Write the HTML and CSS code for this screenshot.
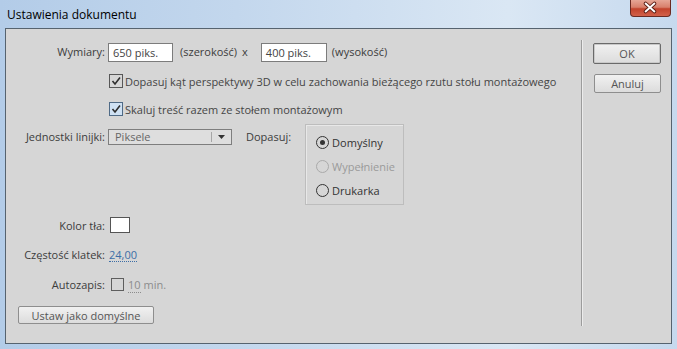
FILE: index.html
```html
<!DOCTYPE html>
<html lang="pl">
<head>
    <meta charset="UTF-8">
    <title>Ustawienia dokumentu</title>
    <link rel="stylesheet" href="styles.css">
</head>
<body>
    <div class="window">
        <div class="titlebar">
            <span class="title">Ustawienia dokumentu</span>
            <span class="close-btn">
                <svg width="41" height="17" viewBox="0 0 41 17">
                    <path d="M16 4.5 L25 12.5 M25 4.5 L16 12.5" stroke="#5a1d14" stroke-width="4" stroke-linecap="round"/>
                    <path d="M16 4.5 L25 12.5 M25 4.5 L16 12.5" stroke="#fff" stroke-width="2" stroke-linecap="round"/>
                </svg>
            </span>
        </div>

        <div class="client">
            <div class="main">
                <div class="row row-size">
                    <span class="label">Wymiary:</span>
                    <span class="field field-w">650 piks.</span>
                    <span class="note">(szerokość)</span>
                    <span class="times">x</span>
                    <span class="field field-h">400 piks.</span>
                    <span class="note note-h">(wysokość)</span>
                </div>

                <div class="row row-check1">
                    <span class="label"></span>
                    <span class="checkbox">
                        <svg width="12" height="12" viewBox="0 0 12 12"><path d="M2.5 6 L5 9 L10 2.5" fill="none" stroke="#2e2e2e" stroke-width="1.6"/></svg>
                    </span>
                    <span class="check-text">Dopasuj kąt perspektywy 3D w celu zachowania bieżącego rzutu stołu montażowego</span>
                </div>

                <div class="row row-check2">
                    <span class="label"></span>
                    <span class="checkbox focused">
                        <svg width="12" height="12" viewBox="0 0 12 12"><path d="M2.5 6 L5 9 L10 2.5" fill="none" stroke="#2e2e2e" stroke-width="1.6"/></svg>
                    </span>
                    <span class="check-text">Skaluj treść razem ze stołem montażowym</span>
                </div>

                <div class="row row-units">
                    <span class="label">Jednostki linijki:</span>
                    <span class="select">
                        <span class="select-value">Piksele</span>
                        <span class="select-arrow">
                            <svg width="7" height="4" viewBox="0 0 7 4"><path d="M0 0 H7 L3.5 4 Z" fill="#333"/></svg>
                        </span>
                    </span>
                    <span class="fit-label">Dopasuj:</span>
                    <div class="radio-group">
                        <div class="radio-row">
                            <span class="radio checked"></span>
                            <span>Domyślny</span>
                        </div>
                        <div class="radio-row disabled">
                            <span class="radio"></span>
                            <span>Wypełnienie</span>
                        </div>
                        <div class="radio-row">
                            <span class="radio"></span>
                            <span>Drukarka</span>
                        </div>
                    </div>
                </div>

                <div class="row row-color">
                    <span class="label">Kolor tła:</span>
                    <span class="swatch"></span>
                </div>

                <div class="row row-fps">
                    <span class="label">Częstość klatek:</span>
                    <span class="hot-value">24,00</span>
                </div>

                <div class="row row-autosave">
                    <span class="label">Autozapis:</span>
                    <span class="checkbox small"></span>
                    <span class="muted"><span class="dotted">10</span> min.</span>
                </div>

                <button class="btn btn-defaults">Ustaw jako domyślne</button>
            </div>

            <div class="side">
                <button class="btn btn-ok">OK</button>
                <button class="btn btn-cancel">Anuluj</button>
            </div>
        </div>
    </div>
</body>
</html>
```

FILE: styles.css
```css
body {
    margin: 0;
    font-family: "Open Sans", "Noto Sans", sans-serif;
    font-size: 11px;
    color: #3c3c3c;
}
.window {
    width: 677px;
    height: 349px;
    box-sizing: border-box;
    padding: 0 5px 5px;
    display: flex;
    flex-direction: column;
    background: linear-gradient(to right, #b3cce8 0%, #c3d7ed 35%, #dae7f4 75%, #c6d9ee 100%);
}
.titlebar {
    height: 28px;
    display: flex;
    justify-content: space-between;
    align-items: flex-start;
}
.title {
    margin: 6px 0 0 2px;
    font-size: 12px;
    color: #000;
}
.close-btn {
    width: 41px;
    height: 17px;
    margin-right: 1px;
    box-sizing: border-box;
    border: 1px solid #6a2a22;
    border-top: none;
    border-radius: 0 0 4px 4px;
    background: linear-gradient(#e6a696 0%, #d8806c 45%, #c2432c 55%, #d2614a 100%);
    display: flex;
}
.close-btn svg {
    margin: -1px 0 0 -1px;
}
.client {
    flex: 1;
    display: flex;
    border: 1px solid #56636f;
    background: #d6d6d6;
}
.main {
    flex: 1;
    padding-top: 14px;
    display: flex;
    flex-direction: column;
    align-items: flex-start;
}
.row {
    display: flex;
    align-items: center;
}
.label {
    width: 99px;
    padding-right: 4px;
    text-align: right;
    flex-shrink: 0;
    white-space: nowrap;
}

/* wymiary */
.row-size {
    height: 19px;
    align-items: flex-start;
}
.row-size .label,
.row-size .note,
.row-size .times {
    line-height: 17px;
}
.field {
    box-sizing: border-box;
    height: 19px;
    padding: 1px 4px 0;
    line-height: 15px;
    background: #fff;
    border: 1px solid #7c7c7c;
    color: #444;
}
.field-w {
    width: 65px;
    margin-left: -1px;
}
.field-h {
    width: 66px;
    margin-left: 13px;
}
.note {
    margin-left: 7px;
}
.times {
    margin-left: 5px;
}
.note-h {
    margin-left: 5px;
}

/* checkboxy */
.checkbox {
    box-sizing: border-box;
    width: 14px;
    height: 14px;
    border: 1px solid #575757;
    display: flex;
    align-items: center;
    justify-content: center;
    flex-shrink: 0;
}
.checkbox.focused {
    background: #cfe1f3;
    border-color: #4f6a86;
}
.checkbox.small {
    width: 13px;
    height: 13px;
    margin-left: 2px;
    border-color: #5e5e5e;
}
.check-text {
    margin-left: 2px;
    color: #454545;
    white-space: nowrap;
}
.row-check1 {
    margin-top: 12px;
    height: 14px;
}
.row-check2 {
    margin-top: 14px;
    height: 14px;
}

/* jednostki */
.row-units {
    margin-top: 8px;
    height: 81px;
    align-items: flex-start;
}
.row-units .label,
.fit-label {
    margin-top: 5px;
    line-height: 16px;
}
.select {
    box-sizing: border-box;
    width: 124px;
    height: 16px;
    margin-top: 5px;
    margin-left: -1px;
    border: 1px solid #7e7e7e;
    background: #dedede;
    display: flex;
}
.select-value {
    flex: 1;
    padding-left: 6px;
    line-height: 14px;
    color: #666;
}
.select-arrow {
    width: 19px;
    border-left: 1px solid #a6a6a6;
    margin: 2px 0;
    display: flex;
    align-items: center;
    justify-content: center;
}
.fit-label {
    margin-left: 14px;
}
.radio-group {
    box-sizing: border-box;
    width: 99px;
    height: 81px;
    margin-left: 14px;
    padding: 9px 0 0 10px;
    border: 1px solid #bdbdbd;
    box-shadow: inset 1px 1px 0 #e8e8e8;
    display: flex;
    flex-direction: column;
    gap: 8px;
}
.radio-row {
    height: 16px;
    display: flex;
    align-items: center;
    gap: 3px;
    color: #333;
}
.radio {
    box-sizing: border-box;
    width: 13px;
    height: 13px;
    border: 1px solid #333;
    border-radius: 50%;
    display: flex;
    align-items: center;
    justify-content: center;
}
.radio.checked::after {
    content: "";
    width: 5px;
    height: 5px;
    border-radius: 50%;
    background: #333;
}
.radio-row.disabled {
    color: #9a9a9a;
}
.radio-row.disabled .radio {
    border-color: #aaa;
}

/* reszta */
.row-color {
    margin-top: 12px;
    height: 16px;
}
.swatch {
    box-sizing: border-box;
    width: 20px;
    height: 16px;
    margin-left: 1px;
    background: #fff;
    border: 1px solid #555;
}
.row-fps {
    margin-top: 13px;
    height: 16px;
}
.hot-value {
    color: #3d6ea6;
    border-bottom: 1px dotted #3d6ea6;
    line-height: 13px;
    margin-top: 2px;
}
.row-autosave {
    margin-top: 14px;
    height: 16px;
}
.muted {
    margin-left: 4px;
    color: #8c8c8c;
}
.dotted {
    border-bottom: 1px dotted #8c8c8c;
}
.btn {
    box-sizing: border-box;
    font-family: inherit;
    font-size: 11px;
    color: #555;
    padding: 0;
    border: 1px solid #8e8e8e;
    border-radius: 2px;
    background: linear-gradient(#f1f1f1, #dcdcdc);
}
.btn-defaults {
    width: 136px;
    height: 18px;
    margin: 14px 0 0 12px;
    line-height: 15px;
}
.side {
    width: 90px;
    margin: 11px 0 17px;
    border-left: 1px solid #9c9c9c;
    box-shadow: inset 1px 0 0 #ececec;
    display: flex;
    flex-direction: column;
    align-items: flex-start;
    padding-top: 3px;
    box-sizing: border-box;
}
.btn-ok {
    width: 68px;
    height: 21px;
    margin-left: 11px;
    border-color: #6a6a6a;
    box-shadow: inset 0 0 0 1px #c9c9c9;
}
.btn-cancel {
    width: 67px;
    height: 19px;
    margin: 10px 0 0 12px;
}
```
